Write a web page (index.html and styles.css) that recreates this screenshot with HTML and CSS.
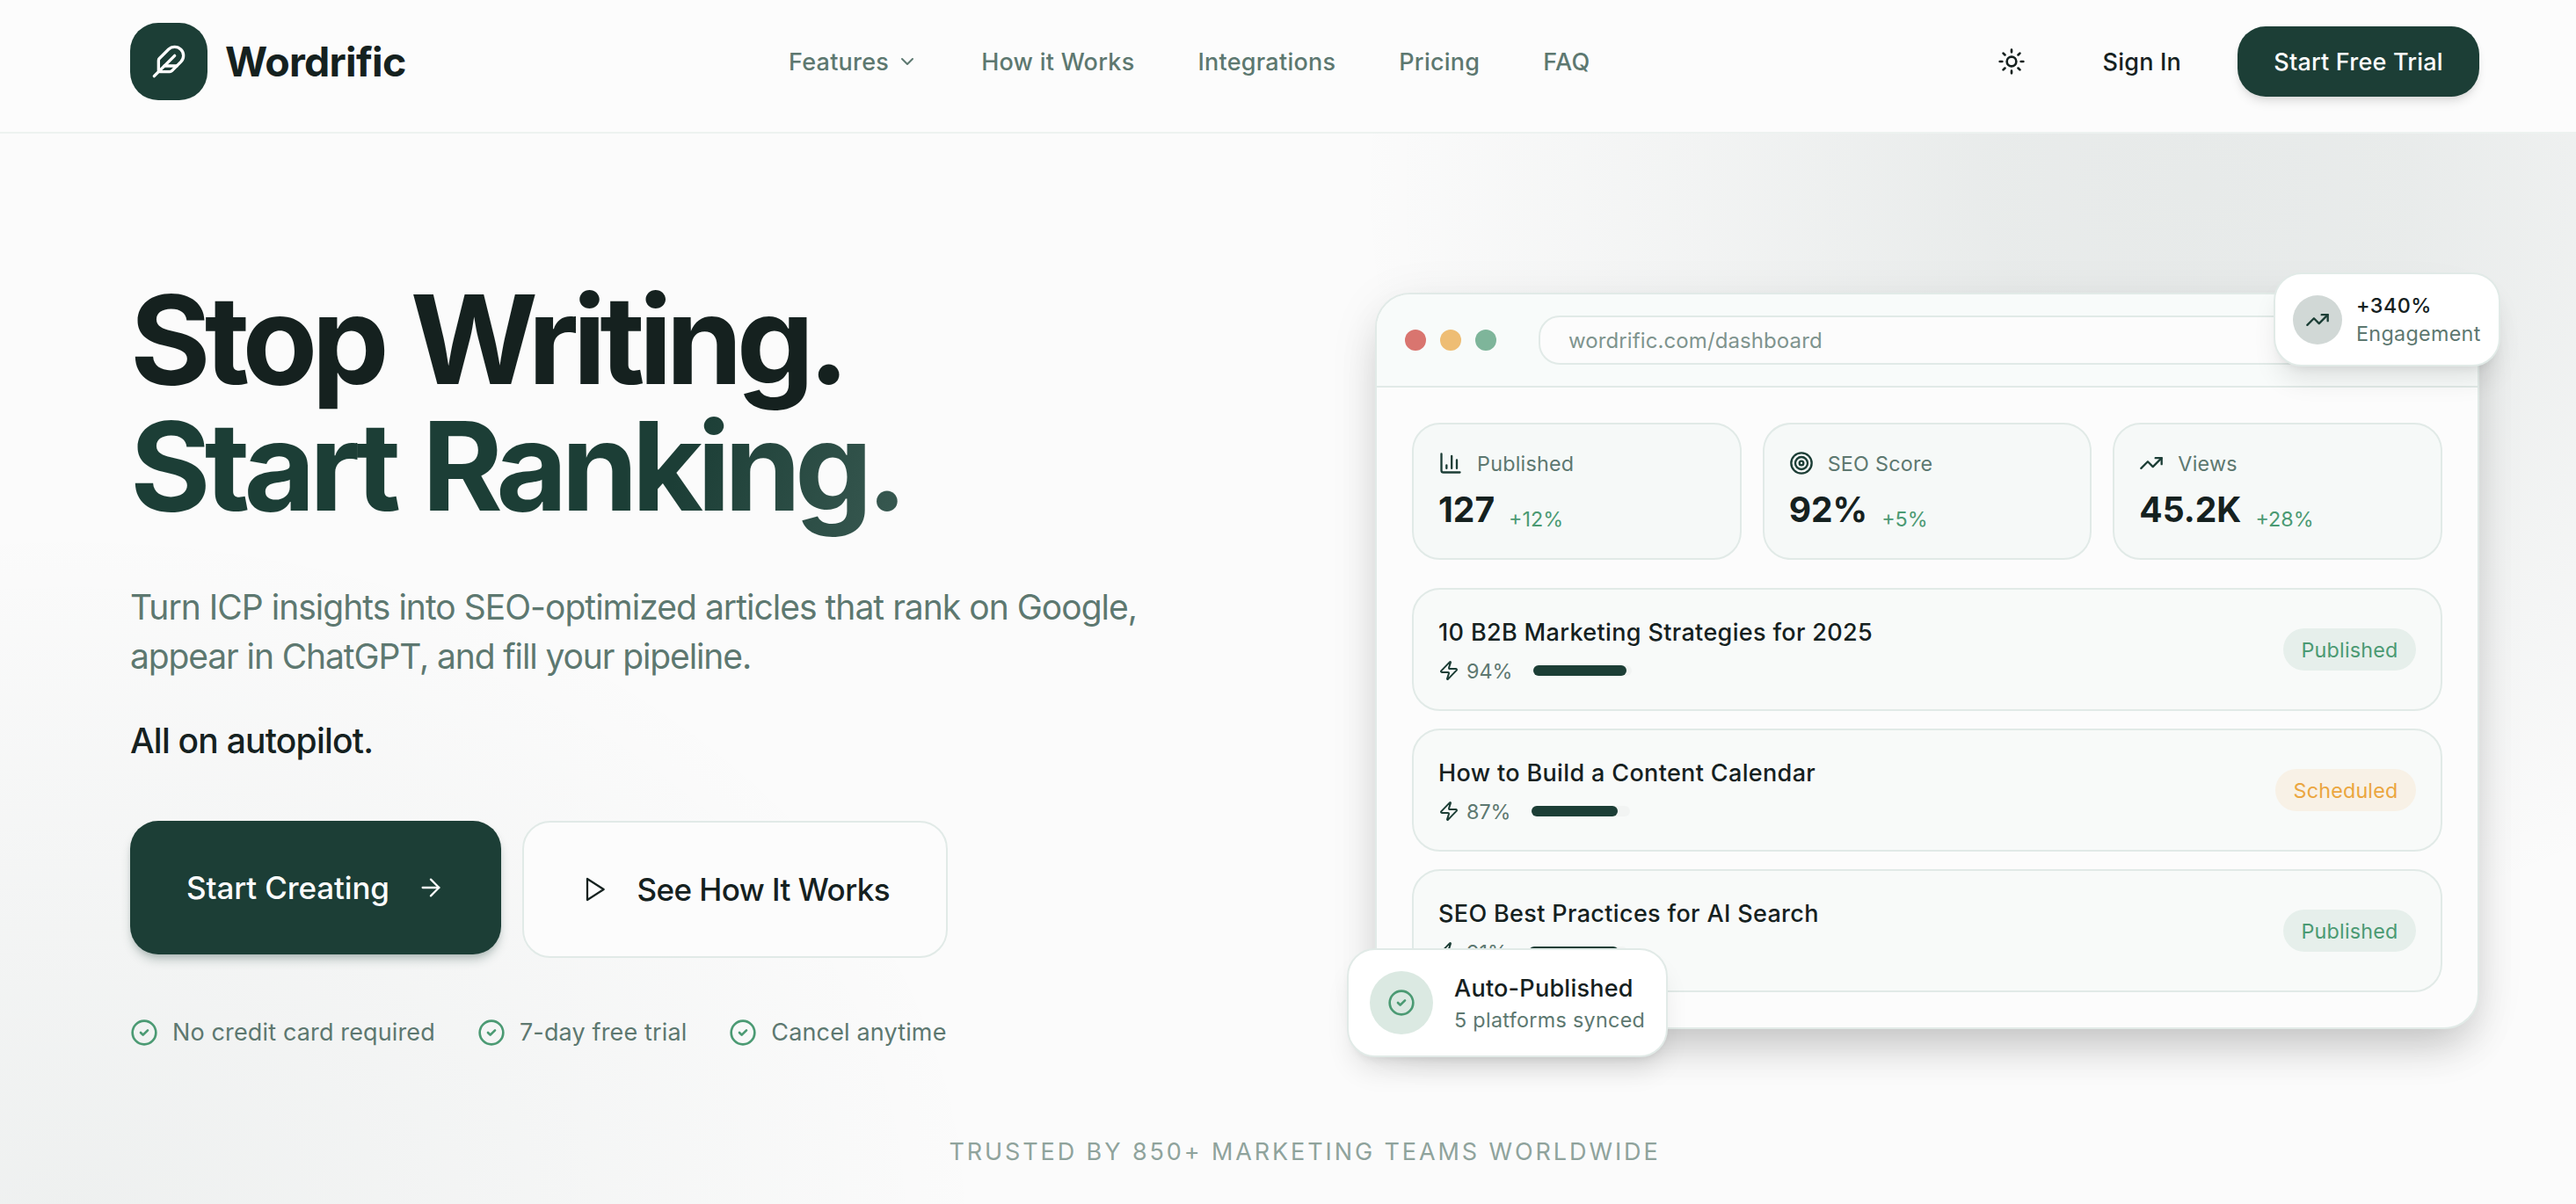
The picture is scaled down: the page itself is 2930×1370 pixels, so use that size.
FILE: index.html
```html
<!DOCTYPE html>
<html lang="en">
<head>
    <meta charset="UTF-8">
    <meta name="viewport" content="width=device-width, initial-scale=1.0">
    <title>Wordrific</title>
    <link rel="stylesheet" href="styles.css">
</head>
<body>
    <!-- shared icons -->
    <svg class="sprite" aria-hidden="true">
        <symbol id="trend" viewBox="0 0 24 24"><path d="M22 7l-8.5 8.5-5-5L2 17"/><path d="M16 7h6v6"/></symbol>
        <symbol id="check" viewBox="0 0 24 24"><circle cx="12" cy="12" r="10"/><path d="M9 12l2 2 4-4"/></symbol>
        <symbol id="zap" viewBox="0 0 24 24"><path d="M4 14a1 1 0 0 1-.78-1.63l9.9-10.2a.5.5 0 0 1 .86.46l-1.92 6.02A1 1 0 0 0 13 10h7a1 1 0 0 1 .78 1.63l-9.9 10.2a.5.5 0 0 1-.86-.46l1.92-6.02A1 1 0 0 0 11 14z"/></symbol>
    </svg>

    <header class="header">
        <a class="logo" href="#">
            <span class="logo-icon">
                <svg class="icon" viewBox="0 0 24 24"><path d="M12.67 19a2 2 0 0 0 1.416-.588l6.154-6.172a6 6 0 0 0-8.49-8.49L5.586 9.914A2 2 0 0 0 5 11.328V18a1 1 0 0 0 1 1z"/><path d="M16 8L2 22"/><path d="M17.5 15H9"/></svg>
            </span>
            <span class="logo-text">Wordrific</span>
        </a>
        <nav class="nav">
            <a href="#" class="nav-features">Features
                <svg class="icon" viewBox="0 0 24 24"><path d="M6 9l6 6 6-6"/></svg>
            </a>
            <a href="#">How it Works</a>
            <a href="#">Integrations</a>
            <a href="#">Pricing</a>
            <a href="#">FAQ</a>
        </nav>
        <div class="actions">
            <svg class="icon sun" viewBox="0 0 24 24"><circle cx="12" cy="12" r="4"/><path d="M12 2v2M12 20v2M4.93 4.93l1.41 1.41M17.66 17.66l1.41 1.41M2 12h2M20 12h2M6.34 17.66l-1.41 1.41M19.07 4.93l-1.41 1.41"/></svg>
            <a class="sign-in" href="#">Sign In</a>
            <a class="btn-trial" href="#">Start Free Trial</a>
        </div>
    </header>

    <main class="hero">
        <div class="hero-grid">
            <section class="intro">
                <h1>Stop Writing.<span class="gradient">Start Ranking.</span></h1>
                <p class="lead">Turn ICP insights into SEO-optimized articles that rank on Google,<br><span class="lead-second">appear in ChatGPT, and fill your pipeline.</span></p>
                <p class="autopilot">All on autopilot.</p>
                <div class="buttons">
                    <a class="btn btn-primary" href="#">
                        <span>Start Creating</span>
                        <svg class="icon" viewBox="0 0 24 24"><path d="M5 12h14"/><path d="M12 5l7 7-7 7"/></svg>
                    </a>
                    <a class="btn btn-outline" href="#">
                        <svg class="icon" viewBox="0 0 24 24"><path d="M6 3l14 9-14 9z"/></svg>
                        <span>See How It Works</span>
                    </a>
                </div>
                <ul class="perks">
                    <li><svg class="icon"><use href="#check"/></svg><span>No credit card required</span></li>
                    <li><svg class="icon"><use href="#check"/></svg><span>7-day free trial</span></li>
                    <li><svg class="icon"><use href="#check"/></svg><span>Cancel anytime</span></li>
                </ul>
            </section>

            <section class="preview">
                <div class="window">
                    <div class="window-bar">
                        <div class="dots">
                            <span class="dot red"></span>
                            <span class="dot yellow"></span>
                            <span class="dot green"></span>
                        </div>
                        <div class="url"><span>wordrific.com/dashboard</span></div>
                    </div>
                    <div class="window-body">
                        <div class="stats">
                            <div class="stat">
                                <div class="stat-label">
                                    <svg class="icon" viewBox="0 0 24 24"><path d="M3 3v16a2 2 0 0 0 2 2h16"/><path d="M18 17V9M13 17V5M8 17v-3"/></svg>
                                    <span>Published</span>
                                </div>
                                <div class="stat-value"><strong>127</strong><span>+12%</span></div>
                            </div>
                            <div class="stat">
                                <div class="stat-label">
                                    <svg class="icon" viewBox="0 0 24 24"><circle cx="12" cy="12" r="10"/><circle cx="12" cy="12" r="6"/><circle cx="12" cy="12" r="2"/></svg>
                                    <span>SEO Score</span>
                                </div>
                                <div class="stat-value"><strong>92%</strong><span>+5%</span></div>
                            </div>
                            <div class="stat">
                                <div class="stat-label">
                                    <svg class="icon"><use href="#trend"/></svg>
                                    <span>Views</span>
                                </div>
                                <div class="stat-value"><strong>45.2K</strong><span>+28%</span></div>
                            </div>
                        </div>
                        <div class="articles">
                            <div class="article">
                                <div>
                                    <div class="article-title">10 B2B Marketing Strategies for 2025</div>
                                    <div class="article-meta">
                                        <svg class="icon"><use href="#zap"/></svg>
                                        <span>94%</span>
                                        <div class="track"><div class="fill" style="width: 94%"></div></div>
                                    </div>
                                </div>
                                <span class="status published">Published</span>
                            </div>
                            <div class="article">
                                <div>
                                    <div class="article-title">How to Build a Content Calendar</div>
                                    <div class="article-meta">
                                        <svg class="icon"><use href="#zap"/></svg>
                                        <span>87%</span>
                                        <div class="track"><div class="fill" style="width: 87%"></div></div>
                                    </div>
                                </div>
                                <span class="status scheduled">Scheduled</span>
                            </div>
                            <div class="article">
                                <div>
                                    <div class="article-title">SEO Best Practices for AI Search</div>
                                    <div class="article-meta">
                                        <svg class="icon"><use href="#zap"/></svg>
                                        <span>91%</span>
                                        <div class="track"><div class="fill" style="width: 91%"></div></div>
                                    </div>
                                </div>
                                <span class="status published">Published</span>
                            </div>
                        </div>
                    </div>
                </div>

                <div class="float float-top">
                    <span class="float-icon"><svg class="icon"><use href="#trend"/></svg></span>
                    <div>
                        <div class="float-title">+340%</div>
                        <div class="float-text">Engagement</div>
                    </div>
                </div>
                <div class="float float-bottom">
                    <span class="float-icon"><svg class="icon"><use href="#check"/></svg></span>
                    <div>
                        <div class="float-title">Auto-Published</div>
                        <div class="float-text">5 platforms synced</div>
                    </div>
                </div>
            </section>
        </div>
        <p class="trusted">TRUSTED BY 850+ MARKETING TEAMS WORLDWIDE</p>
    </main>
</body>
</html>
```
FILE: styles.css
```css
* {
    box-sizing: border-box;
    margin: 0;
    padding: 0;
}

body {
    height: 1370px;
    overflow: hidden;
    font-family: Inter, "Liberation Sans", sans-serif;
    font-size: 27px;
    color: #15211f;
    background-color: #fbfbfb;
}

a {
    color: inherit;
    text-decoration: none;
}

.sprite {
    position: absolute;
    width: 0;
    height: 0;
}

.icon {
    flex: none;
    width: 32px;
    height: 32px;
    fill: none;
    stroke: currentColor;
    stroke-width: 2;
    stroke-linecap: round;
    stroke-linejoin: round;
}

/* header */
.header {
    display: grid;
    grid-template-columns: 749px 1fr auto;
    align-items: center;
    height: 152px;
    padding: 0 110px 10px 148px;
    border-bottom: 2px solid #edf2f0;
    background-color: #fcfcfc;
}

.logo {
    display: flex;
    align-items: center;
    gap: 20px;
}

.logo-icon {
    display: flex;
    align-items: center;
    justify-content: center;
    width: 88px;
    height: 88px;
    border-radius: 32px;
    background-color: #1c3e36;
    color: #fff;
}

.logo-icon .icon {
    width: 40px;
    height: 40px;
}

.logo-text {
    font-size: 46.5px;
    font-weight: 700;
    letter-spacing: -0.016em;
}

.nav {
    display: flex;
    align-items: center;
    gap: 72px;
    color: #5d7870;
    font-weight: 500;
    letter-spacing: 0.25px;
    white-space: nowrap;
}

.nav a {
    display: flex;
    align-items: center;
}

.nav-features {
    gap: 9px;
}

.nav-features .icon {
    width: 24px;
    height: 24px;
}

.actions {
    display: flex;
    align-items: center;
    font-weight: 500;
    letter-spacing: 0.2px;
}

.sun {
    margin-right: 88px;
}

.sign-in {
    margin-right: 64px;
}

.btn-trial {
    display: flex;
    align-items: center;
    justify-content: center;
    width: 275px;
    height: 80px;
    border-radius: 32px;
    background-color: #1c3e36;
    color: #fcfcfc;
    box-shadow: 0 8px 12px -2px rgba(0, 0, 0, 0.1), 0 4px 8px -4px rgba(0, 0, 0, 0.1);
}

/* hero */
.hero {
    height: 1218px;
    padding: 0 110px 0 148px;
    background:
        radial-gradient(ellipse 960px 860px at 2500px 60px, rgba(28, 62, 54, 0.09) 0%, rgba(28, 62, 54, 0.082) 25%, rgba(28, 62, 54, 0.04) 60%, rgba(28, 62, 54, 0) 100%),
        radial-gradient(ellipse 1050px 800px at 80px 1240px, rgba(28, 62, 54, 0.06) 0%, rgba(28, 62, 54, 0.03) 50%, rgba(28, 62, 54, 0) 100%);
}

.hero-grid {
    display: grid;
    grid-template-columns: 1fr 1256px;
}

.intro {
    padding-top: 162px;
}

h1 {
    font-size: 140px;
    font-weight: 700;
    line-height: 144px;
    letter-spacing: -0.05em;
    word-spacing: 5px;
    white-space: nowrap;
}

h1 .gradient {
    display: block;
    width: 1240px;
    margin-bottom: -24px;
    padding-bottom: 24px;
    background: linear-gradient(110deg, #1c3e36 50%, #4a6a62 85%);
    background-clip: text;
    -webkit-background-clip: text;
    color: transparent;
}

.lead,
.autopilot {
    font-size: 39px;
    line-height: 56px;
    letter-spacing: -0.02em;
    white-space: nowrap;
}

.lead {
    margin-top: 61px;
    color: #5d7870;
    letter-spacing: -0.025em;
}

.lead-second {
    letter-spacing: -0.0285em;
}

.autopilot {
    margin-top: 40px;
    font-weight: 500;
}

.buttons {
    display: flex;
    align-items: flex-start;
    gap: 24px;
    margin-top: 63px;
}

.btn {
    display: flex;
    align-items: center;
    justify-content: space-between;
    padding: 0 64px;
    border-radius: 32px;
    font-size: 35px;
    font-weight: 500;
    white-space: nowrap;
}

.btn-primary {
    width: 422px;
    height: 152px;
    background-color: #1c3e36;
    color: #fcfcfc;
    letter-spacing: -0.13px;
    box-shadow: 0 8px 12px -2px rgba(28, 62, 54, 0.25), 0 4px 8px -4px rgba(28, 62, 54, 0.2);
}

.btn-outline {
    width: 484px;
    height: 156px;
    border: 2px solid #e1eae7;
    background-color: #fcfcfc;
    letter-spacing: -0.55px;
}

.btn .icon {
    stroke-width: 1.7;
}

.perks {
    display: flex;
    gap: 48px;
    margin-top: 68px;
    list-style: none;
    color: #5d7870;
    letter-spacing: 0.14px;
    white-space: nowrap;
}

.perks li {
    display: flex;
    align-items: center;
    gap: 16px;
}

.perks .icon {
    color: #4b9a73;
}

/* dashboard preview */
.preview {
    position: relative;
    margin-top: 181px;
}

.window {
    height: 838px;
    overflow: hidden;
    border: 2px solid #e1eae7;
    border-radius: 40px;
    background-color: #fcfcfc;
    box-shadow: 0 28px 50px -12px rgba(0, 0, 0, 0.2), 0 10px 60px rgba(0, 0, 0, 0.07);
}

.window-bar {
    display: flex;
    align-items: center;
    gap: 48px;
    height: 106px;
    padding: 0 32px;
    border-bottom: 2px solid #e1eae7;
    background-color: #f8fbfa;
}

.dots {
    display: flex;
    gap: 16px;
}

.dot {
    width: 24px;
    height: 24px;
    border-radius: 50%;
}

.red { background-color: #d9756f; }
.yellow { background-color: #eebd74; }
.green { background-color: #7eb59a; }

.url {
    flex: 1;
    display: flex;
    align-items: center;
    height: 56px;
    padding-left: 32px;
    border: 2px solid #e1eae7;
    border-radius: 24px;
    background-color: #fcfcfc;
    color: #7f948e;
    font-size: 24px;
    letter-spacing: 0.1px;
}

.window-body {
    padding: 40px;
}

.stats {
    display: grid;
    grid-template-columns: repeat(3, 1fr);
    gap: 24px;
}

.stat {
    height: 156px;
    padding: 28px;
    border: 2px solid #e1eae7;
    border-radius: 32px;
    background-color: #f6f9f8;
}

.stat-label {
    display: flex;
    align-items: center;
    gap: 16px;
    height: 32px;
    color: #5d7870;
    font-size: 23.3px;
    letter-spacing: 0.25px;
}

.stat-label .icon {
    width: 28px;
    height: 28px;
    color: #1c3e36;
}

.stat-value {
    display: flex;
    align-items: flex-end;
    gap: 16px;
    margin-top: 9px;
}

.stat-value strong {
    font-size: 39px;
    font-weight: 700;
    line-height: 56px;
}

.stat-value span {
    margin-bottom: 1px;
    color: #4b9a73;
    font-size: 23.3px;
    line-height: 32px;
}

.articles {
    display: grid;
    gap: 20px;
    margin-top: 32px;
}

.article {
    display: flex;
    align-items: center;
    justify-content: space-between;
    height: 140px;
    padding: 0 28px;
    border: 2px solid #e1eae7;
    border-radius: 32px;
    background-color: #f8faf9;
}

.article-title {
    padding-top: 1px;
    font-weight: 500;
    line-height: 40px;
    letter-spacing: 0.35px;
}

.article-meta {
    display: flex;
    align-items: center;
    height: 32px;
    margin-top: 7px;
    color: #5d7870;
    font-size: 23.3px;
}

.article-meta .icon {
    width: 24px;
    height: 24px;
    margin-right: 8px;
    color: #1c3e36;
}

.track {
    width: 112px;
    height: 12px;
    margin-left: 24px;
    border-radius: 6px;
    background-color: #f2f4f3;
}

.fill {
    height: 100%;
    border-radius: 6px;
    background-color: #1c3e36;
}

.status {
    display: flex;
    align-items: center;
    justify-content: center;
    height: 48px;
    border-radius: 24px;
    font-size: 23.3px;
    letter-spacing: 0.2px;
}

.published {
    width: 151px;
    background-color: #e6efeb;
    color: #4b9a73;
}

.scheduled {
    width: 160px;
    background-color: #f8f1e6;
    color: #eba63f;
}

/* floating cards over the window */
.float {
    position: absolute;
    display: flex;
    align-items: center;
    border: 2px solid #e1eae7;
    border-radius: 32px;
    background-color: #fff;
    box-shadow: 0 20px 30px -6px rgba(0, 0, 0, 0.1), 0 8px 12px -8px rgba(0, 0, 0, 0.1);
    white-space: nowrap;
}

.float-icon {
    display: flex;
    align-items: center;
    justify-content: center;
    border-radius: 50%;
}

.float-title {
    font-weight: 500;
    letter-spacing: 0.25px;
}

.float-text {
    color: #5d7870;
    font-size: 23.3px;
    line-height: 32px;
    letter-spacing: 0.32px;
}

.float-top {
    top: -23px;
    right: -24px;
    width: 258px;
    height: 107px;
    padding-left: 20px;
    gap: 16px;
}

.float-top .float-icon {
    width: 56px;
    height: 56px;
    background-color: #d1d8d6;
    color: #1c3e36;
}

.float-top .icon {
    width: 28px;
    height: 28px;
}

.float-top .float-title {
    font-size: 23.3px;
    line-height: 32px;
    letter-spacing: 0.5px;
}

.float-bottom {
    left: -32px;
    top: 746px;
    width: 365px;
    height: 124px;
    padding-left: 24px;
    gap: 24px;
}

.float-bottom .float-icon {
    width: 72px;
    height: 72px;
    background-color: #dbe9e2;
    color: #4b9a73;
}

.float-bottom .float-title {
    line-height: 40px;
}

.trusted {
    margin-top: 104px;
    text-align: center;
    color: #8fa39c;
    letter-spacing: 2.9px;
    line-height: 32px;
}
```
